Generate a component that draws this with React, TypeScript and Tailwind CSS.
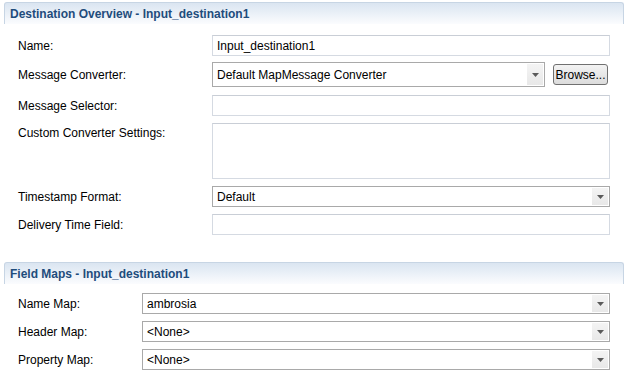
import React from "react";

function Caret() {
    return (
        <div className="w-[16px] self-stretch bg-gradient-to-b from-[#f4f4f4] to-[#e8e8e8] flex items-center justify-center">
            <svg width="7" height="4" viewBox="0 0 7 4">
                <path d="M0 0 H7 L3.5 4 Z" fill="#5a5a5a" />
            </svg>
        </div>
    );
}

function TextBox({ value = "", h = "h-[21px]" }: { value?: string; h?: string }) {
    return (
        <div className={`flex-1 ${h} border border-[#d5dae2] border-t-[#c9ced6] bg-white px-[4px] flex items-center text-black`}>
            {value}
        </div>
    );
}

function Combo({ value, h = "h-[21px]" }: { value: string; h?: string }) {
    return (
        <div className={`flex-1 ${h} border border-[#a9a9a9] bg-white pl-[4px] pr-[1px] py-[1px] flex items-center text-black`}>
            <span className="flex-1 leading-none">{value}</span>
            <Caret />
        </div>
    );
}

function Header({ title }: { title: string }) {
    return (
        <div className="h-[22px] border border-b-0 border-[#c7d5e4] rounded-t-[3px] bg-gradient-to-b from-[#dae5f1] to-[#fbfcfe] pl-[5px] flex items-center">
            <span className="font-bold text-[#1f4c7c] text-[12px]">{title}</span>
        </div>
    );
}

function Row({ label, mt, labelW, children }: { label: string; mt: string; labelW: string; children: React.ReactNode }) {
    return (
        <div className={`flex items-center ${mt} pl-[14px] pr-[14px]`}>
            <div className={`${labelW} shrink-0 text-black`}>{label}</div>
            {children}
        </div>
    );
}

export default function App() {
    return (
        <div className="w-[628px] h-[378px] bg-white overflow-hidden text-[12px] pt-[2px] px-[4px]" style={{ fontFamily: '"Liberation Sans", Arial, sans-serif' }}>
            <Header title="Destination Overview - Input_destination1" />

            <Row label="Name:" mt="mt-[11px]" labelW="w-[194px]">
                <TextBox value="Input_destination1" />
            </Row>

            <Row label="Message Converter:" mt="mt-[6px]" labelW="w-[194px]">
                <Combo value="Default MapMessage Converter" h="h-[25px]" />
                <button className="ml-[8px] mr-[2px] w-[55px] h-[21px] border border-[#707070] rounded-[3px] bg-gradient-to-b from-[#f3f3f3] to-[#dcdcdc] text-black text-[12px] flex items-center justify-center">
                    Browse...
                </button>
            </Row>

            <Row label="Message Selector:" mt="mt-[8px]" labelW="w-[194px]">
                <TextBox />
            </Row>

            <div className="flex mt-[7px] pl-[14px] pr-[14px]">
                <div className="w-[194px] shrink-0 text-black pt-[1px]">Custom Converter Settings:</div>
                <TextBox h="h-[56px]" />
            </div>

            <Row label="Timestamp Format:" mt="mt-[7px]" labelW="w-[194px]">
                <Combo value="Default" />
            </Row>

            <Row label="Delivery Time Field:" mt="mt-[7px]" labelW="w-[194px]">
                <TextBox />
            </Row>

            <div className="mt-[27px]">
                <Header title="Field Maps - Input_destination1" />
            </div>

            <Row label="Name Map:" mt="mt-[9px]" labelW="w-[124px]">
                <Combo value="ambrosia" />
            </Row>

            <Row label="Header Map:" mt="mt-[7px]" labelW="w-[124px]">
                <Combo value="<None>" />
            </Row>

            <Row label="Property Map:" mt="mt-[7px]" labelW="w-[124px]">
                <Combo value="<None>" />
            </Row>
        </div>
    );
}
